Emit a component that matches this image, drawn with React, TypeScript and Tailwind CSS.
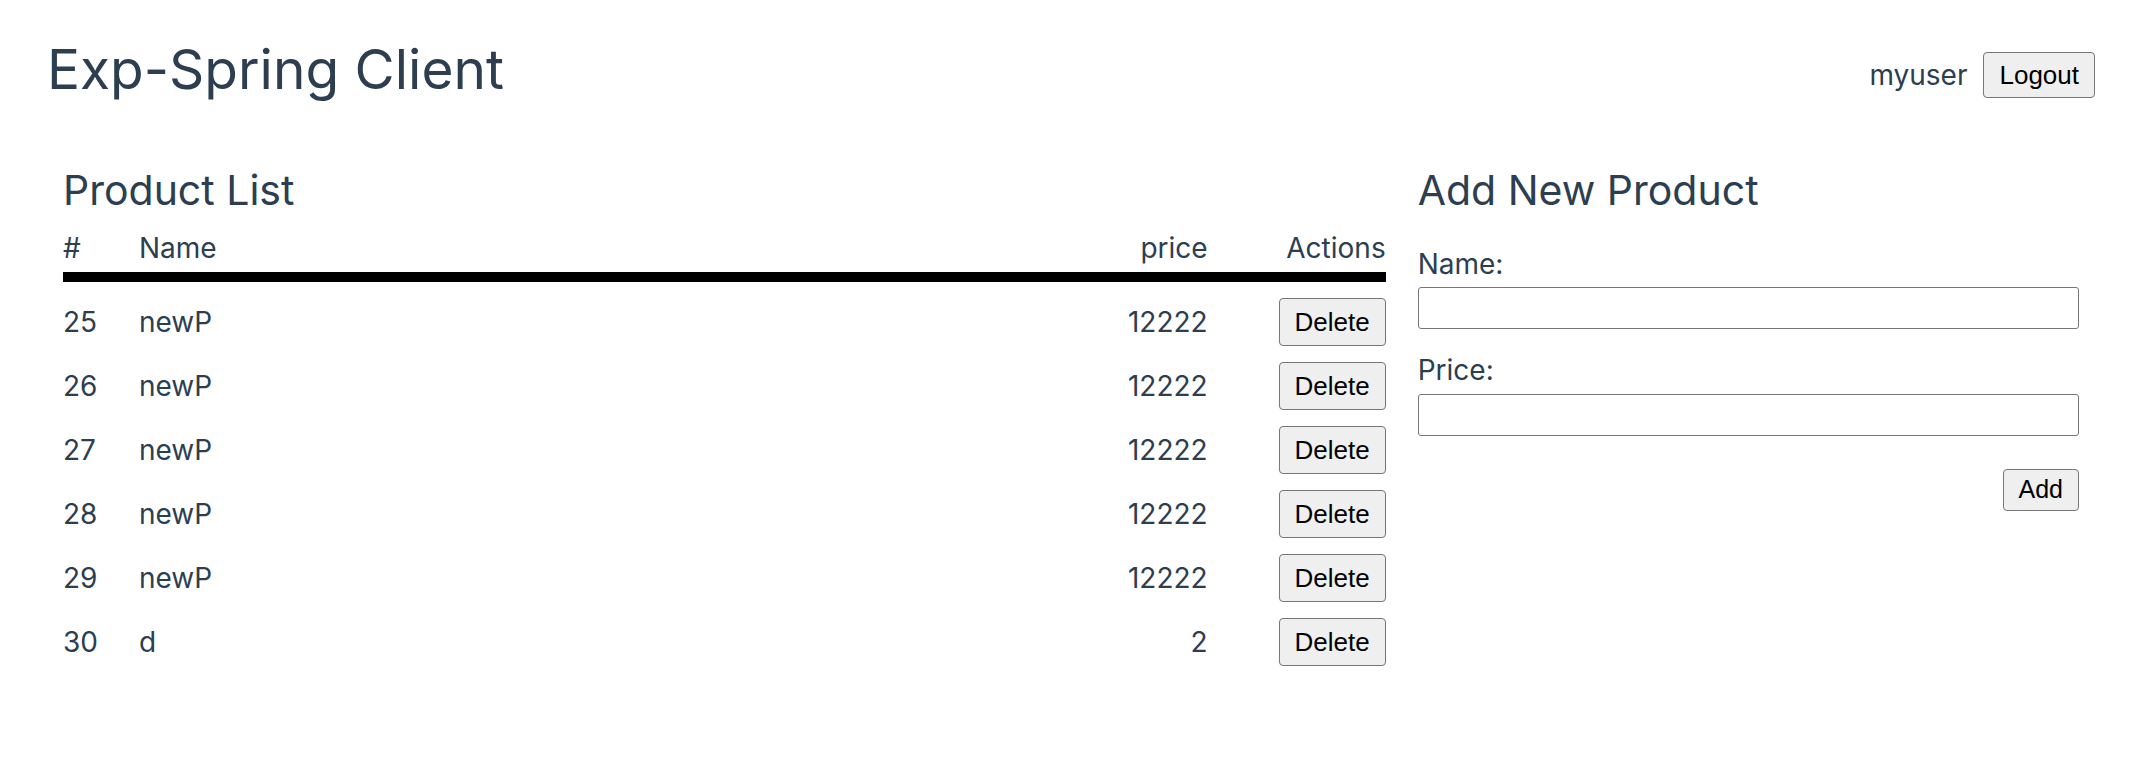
import { useState } from "react";

type Product = { id: number; name: string; price: number };

const initialProducts: Product[] = [
  { id: 25, name: "newP", price: 12222 },
  { id: 26, name: "newP", price: 12222 },
  { id: 27, name: "newP", price: 12222 },
  { id: 28, name: "newP", price: 12222 },
  { id: 29, name: "newP", price: 12222 },
  { id: 30, name: "d", price: 2 },
];

const btn =
  "rounded-[4px] border-[1.5px] border-[#767676] bg-[#efefef] px-[15px] font-['Liberation_Sans',Arial,sans-serif] text-black hover:bg-[#e5e5e5]";

export default function App() {
  const [products, setProducts] = useState<Product[]>(initialProducts);
  const [name, setName] = useState("");
  const [price, setPrice] = useState("");

  const addProduct = () => {
    if (!name) return;
    const nextId = products.length ? products[products.length - 1].id + 1 : 1;
    setProducts((prev) => [...prev, { id: nextId, name, price: Number(price) || 0 }]);
    setName("");
    setPrice("");
  };

  return (
    <div className="min-h-screen bg-white font-['Inter',sans-serif] text-[#2c3e50]">
      <header className="flex items-start justify-between pl-[47px] pr-[55px] pt-[37px]">
        <h1 className="text-[55px] leading-[64px] font-normal">Exp-Spring Client</h1>
        <div className="mt-[15px] flex items-center gap-4">
          <span className="text-[28px] leading-[39px]">myuser</span>
          <button className={`${btn} h-[46px] text-[26px]`}>Logout</button>
        </div>
      </header>

      <main className="mt-[65px] flex gap-8 pl-[63px] pr-[71px]">
        <section className="flex-[2]">
          <h2 className="text-[41px] leading-[48px]">Product List</h2>
          <div className="mt-[15px] grid grid-cols-[76px_1fr_200px_178px] text-[28px] leading-[39px]">
            <div>#</div>
            <div>Name</div>
            <div className="text-right">price</div>
            <div className="text-right">Actions</div>
          </div>
          <div className="mt-[4px] h-[10px] bg-black" />
          <div className="mt-2">
            {products.map((p) => (
              <div
                key={p.id}
                className="grid grid-cols-[76px_1fr_200px_178px] items-center py-2 text-[28px] leading-[39px]"
              >
                <div>{p.id}</div>
                <div>{p.name}</div>
                <div className="text-right">{p.price}</div>
                <div className="flex justify-end">
                  <button
                    onClick={() => setProducts((prev) => prev.filter((x) => x.id !== p.id))}
                    className={`${btn} h-[48px] text-[26px]`}
                  >
                    Delete
                  </button>
                </div>
              </div>
            ))}
          </div>
        </section>

        <section className="flex flex-1 flex-col">
          <h2 className="text-[41px] leading-[48px]">Add New Product</h2>
          <label className="mt-[31px] text-[28px] leading-[39px]">Name:</label>
          <input
            value={name}
            onChange={(e) => setName(e.target.value)}
            className="mt-[3px] h-[42px] rounded-[3px] border-[1.5px] border-[#767676] px-2 text-[22px] outline-none"
          />
          <label className="mt-[22px] text-[28px] leading-[39px]">Price:</label>
          <input
            value={price}
            onChange={(e) => setPrice(e.target.value)}
            className="mt-[4px] h-[42px] rounded-[3px] border-[1.5px] border-[#767676] px-2 text-[22px] outline-none"
          />
          <button onClick={addProduct} className={`${btn} mt-[33px] h-[42px] self-end text-[25px]`}>
            Add
          </button>
        </section>
      </main>
    </div>
  );
}
